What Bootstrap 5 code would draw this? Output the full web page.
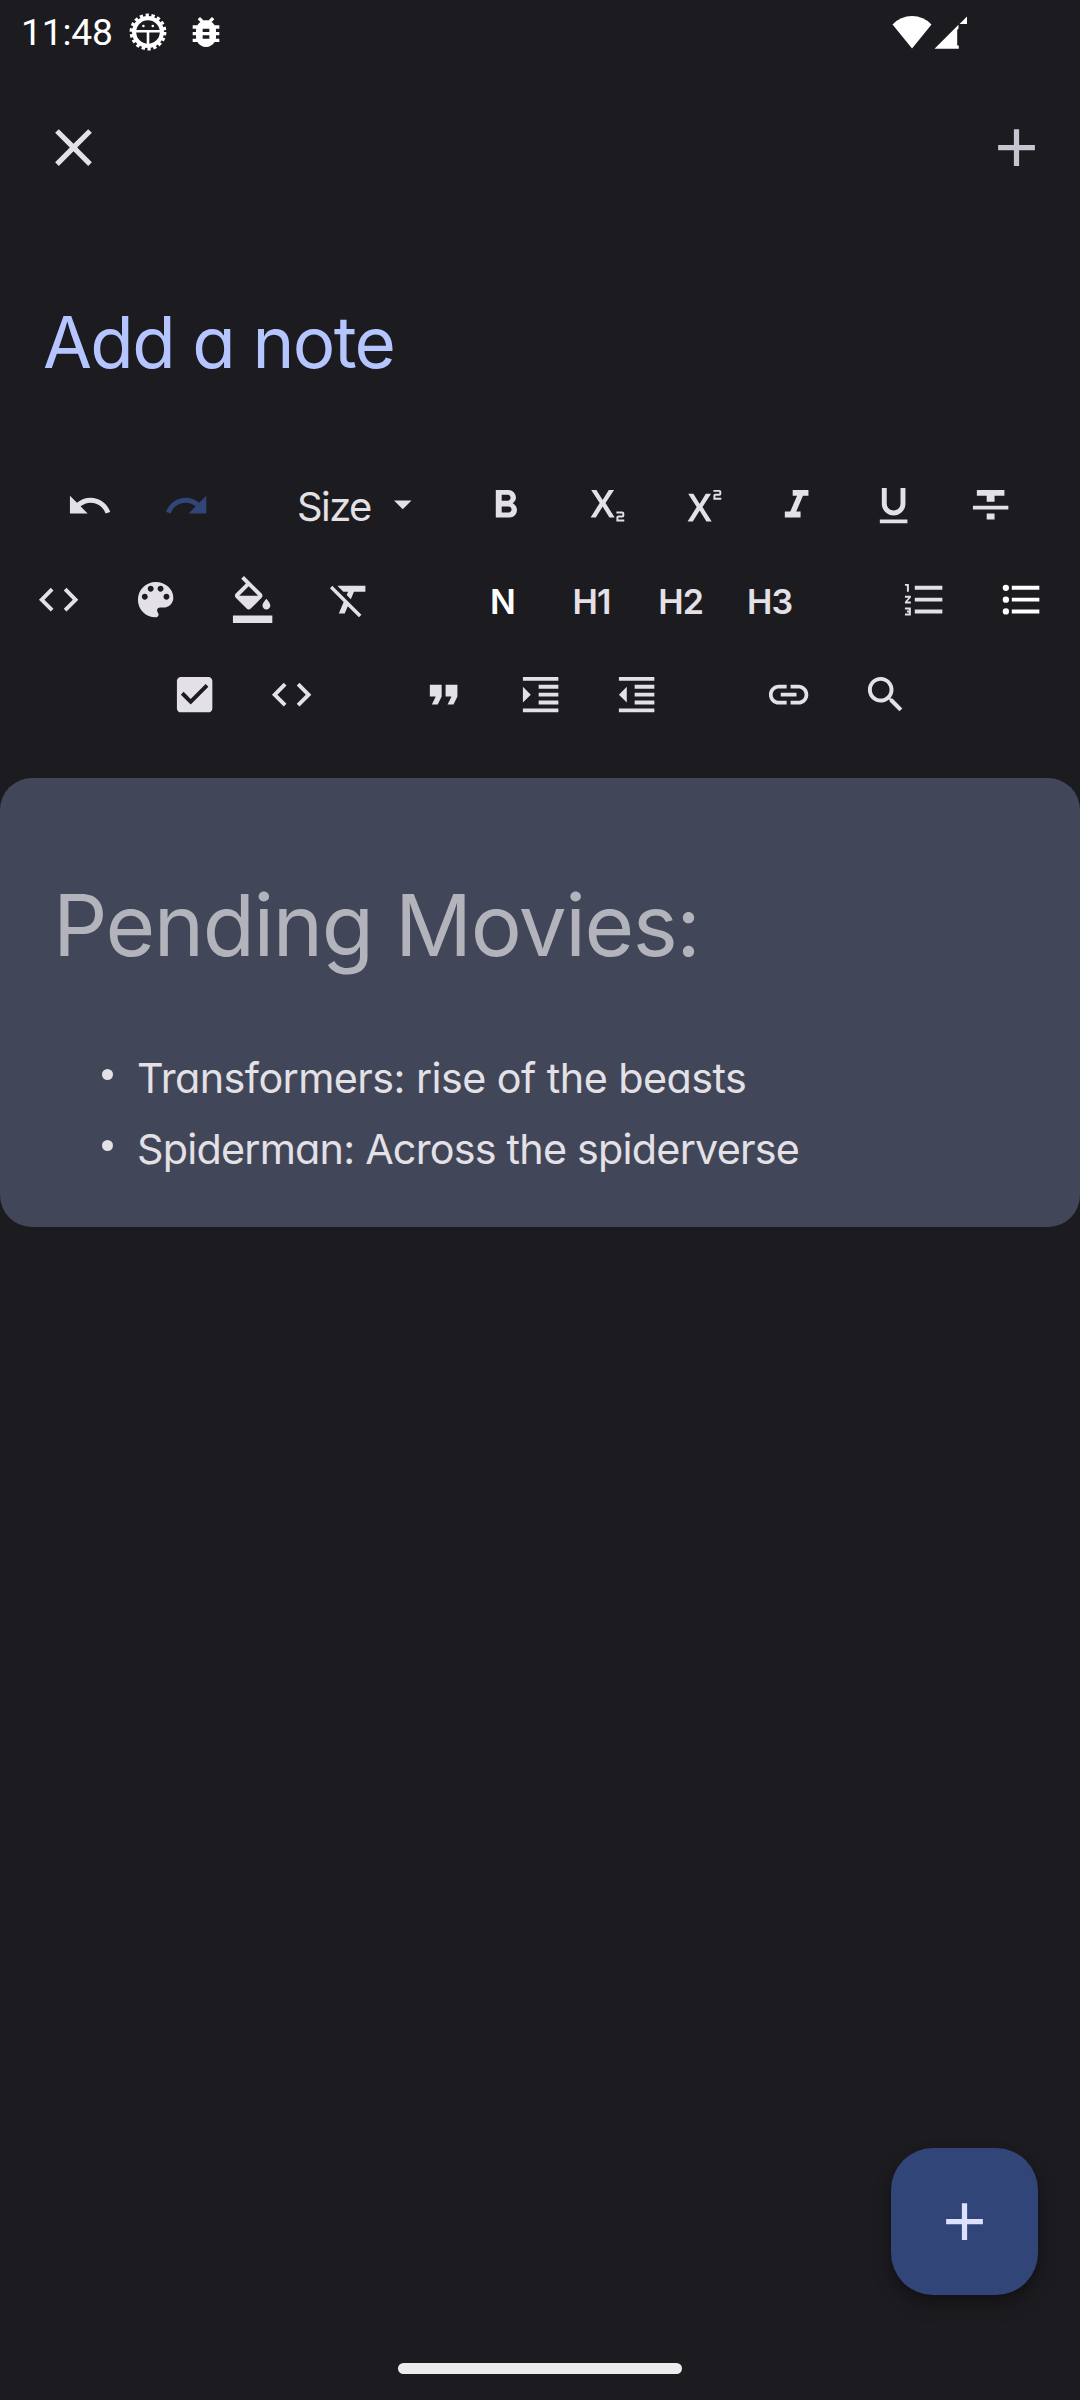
<!DOCTYPE html>
<html lang="en">
<head>
<meta charset="utf-8">
<meta name="viewport" content="width=device-width, initial-scale=1">
<title>Add a note</title>
<link href="https://cdn.jsdelivr.net/npm/bootstrap@5.3.0/dist/css/bootstrap.min.css" rel="stylesheet">
<style>
:root{--surface:#1c1b1f;--ink:#e4e1e6;--panel:#424659;--primary:#b4c5ff;--primary-box:#324578}
body{width:1080px;height:2400px;background:var(--surface);color:var(--ink);font-family:Inter,Lato,sans-serif;font-feature-settings:"cv11" 1;overflow:hidden}
svg{display:block;flex:none;fill:currentColor}
.status-bar{height:63px;padding:0 112px 0 21px;color:#fff}
.clock{font:400 37.2px/44px Roboto,sans-serif;width:108px;letter-spacing:-.2px}
.bug{margin-left:19px}
.app-bar{height:169px;padding:0 32px 0 41.8px}
.app-bar .btn,.fab,.tool{border:0;padding:0;color:inherit;border-radius:0}
.app-bar .add{color:#c6c5d0}
.page-title{font-size:71px;line-height:90px;letter-spacing:-1.65px;color:var(--primary);padding:65px 0 0 43px;height:226px;font-weight:400}
.tool-row{height:94.5px}
.tool{width:96.86px;height:94.5px;display:flex;align-items:center;justify-content:center}
.tool svg{width:47.25px;height:47.25px}
.row-a{padding-left:41.4px}
.row-b{padding-left:10.3px}
.row-c{padding-left:146.6px}
.redo{color:var(--primary-box)}
.size-menu{width:222.4px;padding-left:62px;font-size:39.9px;line-height:48px;letter-spacing:-1.6px}
.size-menu span{padding-top:4px;width:97px}
.level{width:89px;font-size:34px;font-weight:600;padding-top:4px;letter-spacing:-.8px}
.level.active,.tool.active{color:#fff}
.gap-wide{width:60.4px}
.gap-list{width:62.2px}
.gap-block{width:54.6px}
.editor{margin-top:36.2px;height:449px;background:var(--panel);border-radius:32px;padding:91px 54px 0 53px}
.editor h2{font-size:85.3px;line-height:112px;font-weight:400;letter-spacing:-1.45px;color:#b3b3bc;margin:0 0 62px}
.editor li{height:71px;line-height:71px;font-size:41.3px;letter-spacing:-.56px;padding-left:49px}
.editor li+li{letter-spacing:-.78px}
.dot{width:11px;height:11px;border-radius:50%;background:var(--ink);margin:0 24px 8px 0}
.fab{width:147px;height:147px;border-radius:42px;background:var(--primary-box);color:#dbe1ff;margin:auto 42px 68px auto;box-shadow:0 10px 20px rgba(0,0,0,.22),0 4px 10px rgba(0,0,0,.18)}
.nav-pill{width:284px;height:11px;border-radius:6px;background:#ececec;margin:0 auto 26px}
</style>
</head>
<body class="d-flex flex-column">
<header class="status-bar d-flex align-items-center">
  <span class="clock">11:48</span>
  <svg width="38" height="38" viewBox="-19 -19 38 38">
    <circle r="13.900" fill="none" stroke="#fff" stroke-width="4.200"/>
    <circle r="16.700" fill="none" stroke="#fff" stroke-width="3.400" stroke-dasharray="3.300 2.529"/>
    <path d="M-12-2h24v2.600H1.300v12h-2.600v-12H-12z"/>
    <circle cx="-4.600" cy="-6" r="1.300"/><circle cx="4.800" cy="-6" r="1.300"/>
  </svg>
  <svg class="bug" width="40" height="40" viewBox="0 0 24 24"><path d="M20 8h-2.810c-.450-.780-1.070-1.450-1.820-1.960L17 4.410 15.590 3l-2.170 2.170C12.960 5.060 12.490 5 12 5s-.960.060-1.410.170L8.410 3 7 4.410l1.620 1.630C7.880 6.550 7.260 7.220 6.810 8H4v2h2.090c-.050.330-.090.660-.090 1v1H4v2h2v1c0 .340.040.670.090 1H4v2h2.810c1.040 1.790 2.970 3 5.190 3s4.150-1.210 5.190-3H20v-2h-2.090c.050-.330.090-.660.090-1v-1h2v-2h-2v-1c0-.340-.040-.670-.090-1H20zm-6 8h-4v-2h4zm0-4h-4v-2h4z"/></svg>
  <svg class="ms-auto" width="76" height="34" viewBox="0 0 76 34"><path d="M.5 9.500Q8.500 1 20 1t19.500 8.500L20 33.500z"/><path d="M42.500 33.800L66.500 9.800V13.500L65.200 15V30.500H66.800V33.800zM67.500 9L75 1.500V9z"/></svg>
</header>

<nav class="app-bar d-flex align-items-center justify-content-between">
  <button class="btn" aria-label="Close"><svg width="63" height="63" viewBox="0 0 24 24"><path d="M19 6.410 17.590 5 12 10.590 6.410 5 5 6.410 10.590 12 5 17.590 6.410 19 12 13.410 17.590 19 19 17.590 13.410 12z"/></svg></button>
  <button class="btn add" aria-label="Add"><svg width="63" height="63" viewBox="0 0 24 24"><path d="M19 13h-6v6h-2v-6H5v-2h6V5h2v6h6z"/></svg></button>
</nav>

<h1 class="page-title m-0">Add a note</h1>

<section aria-label="Formatting">
  <div class="tool-row row-a d-flex">
    <button class="btn tool" aria-label="Undo"><svg viewBox="0 0 24 24"><path d="M12.500 8c-2.650 0-5.050.990-6.900 2.600L2 7v9h9l-3.620-3.620c1.390-1.160 3.160-1.880 5.120-1.880 3.540 0 6.550 2.310 7.600 5.500l2.370-.780C21.080 11.030 17.150 8 12.500 8z"/></svg></button>
    <button class="btn tool redo" aria-label="Redo"><svg viewBox="0 0 24 24"><path d="M18.400 10.600C16.550 8.990 14.150 8 11.500 8c-4.650 0-8.580 3.030-9.960 7.220L3.900 16c1.050-3.190 4.050-5.500 7.600-5.500 1.950 0 3.730.720 5.120 1.880L13 16h9V7z"/></svg></button>
    <div class="size-menu d-flex align-items-center"><span>Size</span><svg width="18" height="10" viewBox="0 0 18 10"><path d="M0 .5h17.500L8.750 9.200z"/></svg></div>
    <button class="btn tool" aria-label="Bold"><svg viewBox="0 0 24 24"><path d="M15.600 10.790c.970-.670 1.650-1.770 1.650-2.790 0-2.260-1.750-4-4-4H7v14h7.040c2.090 0 3.710-1.700 3.710-3.790 0-1.520-.860-2.820-2.150-3.420zM10 6.500h3c.830 0 1.500.670 1.500 1.500s-.670 1.500-1.500 1.500h-3v-3zm3.500 9H10v-3h3.500c.830 0 1.500.670 1.500 1.500s-.670 1.500-1.500 1.500z"/></svg></button>
    <button class="btn tool" aria-label="Subscript"><svg viewBox="0 0 24 24"><path d="M22 18h-2v1h3v1h-4v-2c0-.550.450-1 1-1h2v-1h-3v-1h3c.550 0 1 .450 1 1v1c0 .550-.450 1-1 1zM5.880 18h2.660l3.400-5.420h.120l3.400 5.420h2.660l-4.650-7.270L17.810 4h-2.680l-3.070 4.990h-.120L8.850 4H6.190l4.320 6.730z"/></svg></button>
    <button class="btn tool" aria-label="Superscript"><svg viewBox="0 0 24 24"><path d="M22 7h-2v1h3v1h-4V7c0-.550.450-1 1-1h2V5h-3V4h3c.550 0 1 .450 1 1v1c0 .550-.450 1-1 1zM5.880 20h2.660l3.400-5.420h.120l3.400 5.420h2.660l-4.650-7.270L17.810 6h-2.680l-3.070 4.990h-.120L8.850 6H6.190l4.320 6.730z"/></svg></button>
    <button class="btn tool" aria-label="Italic"><svg viewBox="0 0 24 24"><path d="M10 4v3h2.210l-3.420 8H6v3h8v-3h-2.210l3.420-8H18V4z"/></svg></button>
    <button class="btn tool" aria-label="Underline"><svg viewBox="0 0 24 24"><path d="M12 17c3.310 0 6-2.690 6-6V3h-2.500v8c0 1.930-1.570 3.500-3.500 3.500S8.500 12.930 8.500 11V3H6v8c0 3.310 2.690 6 6 6zm-7 2v2h14v-2z"/></svg></button>
    <button class="btn tool" aria-label="Strikethrough"><svg viewBox="0 0 24 24"><path d="M10 19h4v-3h-4v3zM5 4v3h5v3h4V7h5V4zM3 14h18v-2H3z"/></svg></button>
  </div>
  <div class="tool-row row-b d-flex">
    <button class="btn tool" aria-label="Inline code"><svg viewBox="0 0 24 24"><path d="M9.400 16.600 4.800 12l4.600-4.600L8 6l-6 6 6 6zm5.200 0 4.600-4.600-4.600-4.600L16 6l6 6-6 6z"/></svg></button>
    <button class="btn tool" aria-label="Text color"><svg viewBox="0 0 24 24"><path d="M12 3c-4.970 0-9 4.030-9 9s4.030 9 9 9c.830 0 1.500-.670 1.500-1.500 0-.390-.150-.740-.390-1.010-.230-.260-.380-.610-.380-.990 0-.830.670-1.500 1.500-1.500H16c2.760 0 5-2.240 5-5 0-4.420-4.030-8-9-8zm-5.500 9c-.830 0-1.500-.670-1.500-1.500S5.670 9 6.500 9 8 9.670 8 10.500 7.330 12 6.500 12zm3-4C8.670 8 8 7.330 8 6.500S8.670 5 9.500 5s1.500.670 1.500 1.500S10.330 8 9.500 8zm5 0c-.830 0-1.500-.670-1.500-1.500S13.670 5 14.500 5s1.500.670 1.500 1.500S15.330 8 14.500 8zm3 4c-.830 0-1.500-.670-1.500-1.500S16.670 9 17.500 9s1.500.670 1.500 1.500-.670 1.500-1.500 1.500z"/></svg></button>
    <button class="btn tool" aria-label="Background color"><svg viewBox="0 0 24 24"><path d="M16.560 8.940 7.620 0 6.210 1.410l2.380 2.380-5.150 5.150c-.590.590-.590 1.540 0 2.120l5.500 5.500c.290.290.680.440 1.060.440s.770-.150 1.060-.440l5.500-5.500c.590-.580.590-1.530 0-2.120zM5.210 10 10 5.210 14.790 10zM19 11.500s-2 2.170-2 3.500c0 1.100.900 2 2 2s2-.900 2-2c0-1.330-2-3.500-2-3.500zM2 20h20v4H2z"/></svg></button>
    <button class="btn tool" aria-label="Clear format"><svg viewBox="0 0 24 24"><path d="M3.270 5 2 6.270l6.970 6.970L6.500 19h3l1.570-3.660L16.730 21 18 19.730 3.550 5.270zM6 5v.180L8.820 8h2.400l-.720 1.680 2.100 2.100L14.210 8H20V5z"/></svg></button>
    <span class="gap-wide"></span>
    <button class="btn tool level active">N</button>
    <button class="btn tool level">H1</button>
    <button class="btn tool level">H2</button>
    <button class="btn tool level">H3</button>
    <span class="gap-list"></span>
    <button class="btn tool" aria-label="Numbered list"><svg viewBox="0 0 24 24"><path d="M2 17h2v.500H3v1h1v.500H2v1h3v-4H2zM3 8h1V4H2v1h1zm-1 3h1.800L2 13.100v.900h3v-1H3.200L5 10.900V10H2zm5-6v2h14V5zm0 14h14v-2H7zm0-6h14v-2H7z"/></svg></button>
    <button class="btn tool active" aria-label="Bulleted list"><svg viewBox="0 0 24 24"><path d="M7 5h14v2H7zm0 6h14v2H7zm0 6h14v2H7z"/><circle cx="4" cy="6" r="1.600"/><circle cx="4" cy="12" r="1.600"/><circle cx="4" cy="18" r="1.600"/></svg></button>
  </div>
  <div class="tool-row row-c d-flex">
    <button class="btn tool" aria-label="Check list"><svg viewBox="0 0 24 24"><path d="M19 3H5c-1.110 0-2 .900-2 2v14c0 1.100.890 2 2 2h14c1.110 0 2-.900 2-2V5c0-1.100-.890-2-2-2zm-9 14-5-5 1.410-1.410L10 14.170l7.590-7.590L19 8z"/></svg></button>
    <button class="btn tool" aria-label="Code block"><svg viewBox="0 0 24 24"><path d="M9.400 16.600 4.800 12l4.600-4.600L8 6l-6 6 6 6zm5.200 0 4.600-4.600-4.600-4.600L16 6l6 6-6 6z"/></svg></button>
    <span class="gap-block"></span>
    <button class="btn tool" aria-label="Quote"><svg viewBox="0 0 24 24"><path d="M6 17h3l2-4V7H5v6h3zm8 0h3l2-4V7h-6v6h3z"/></svg></button>
    <button class="btn tool" aria-label="Increase indent"><svg viewBox="0 0 24 24"><path d="M3 21h18v-2H3zM3 8v8l4-4zm8 9h10v-2H11zM3 3v2h18V3zm8 6h10V7H11zm0 4h10v-2H11z"/></svg></button>
    <button class="btn tool" aria-label="Decrease indent"><svg viewBox="0 0 24 24"><path d="M11 17h10v-2H11zm-8-5 4 4V8zm0 9h18v-2H3zM3 3v2h18V3zm8 6h10V7H11zm0 4h10v-2H11z"/></svg></button>
    <span class="gap-block"></span>
    <button class="btn tool" aria-label="Link"><svg viewBox="0 0 24 24"><path d="M3.900 12c0-1.710 1.390-3.100 3.100-3.100h4V7H7c-2.760 0-5 2.240-5 5s2.240 5 5 5h4v-1.900H7c-1.710 0-3.100-1.390-3.100-3.100zM8 13h8v-2H8zm9-6h-4v1.900h4c1.710 0 3.100 1.390 3.100 3.100s-1.390 3.100-3.100 3.100h-4V17h4c2.760 0 5-2.240 5-5s-2.240-5-5-5z"/></svg></button>
    <button class="btn tool" aria-label="Search"><svg viewBox="0 0 24 24"><path d="M15.500 14h-.790l-.280-.270C15.410 12.590 16 11.110 16 9.500 16 5.910 13.090 3 9.500 3S3 5.910 3 9.500 5.910 16 9.500 16c1.610 0 3.090-.590 4.230-1.570l.270.280v.790l5 4.990L20.490 19zm-6 0C7.010 14 5 11.990 5 9.500S7.010 5 9.500 5 14 7.010 14 9.500 11.990 14 9.500 14z"/></svg></button>
  </div>
</section>

<main class="editor">
  <h2>Pending Movies:</h2>
  <ul class="list-unstyled m-0">
    <li class="d-flex align-items-center"><i class="dot"></i>Transformers: rise of the beasts</li>
    <li class="d-flex align-items-center"><i class="dot"></i>Spiderman: Across the spiderverse</li>
  </ul>
</main>

<button class="btn fab d-flex align-items-center justify-content-center" aria-label="New note"><svg width="63" height="63" viewBox="0 0 24 24"><path d="M19 13h-6v6h-2v-6H5v-2h6V5h2v6h6z"/></svg></button>
<div class="nav-pill"></div>
<script src="https://cdn.jsdelivr.net/npm/bootstrap@5.3.0/dist/js/bootstrap.bundle.min.js"></script>
</body>
</html>
